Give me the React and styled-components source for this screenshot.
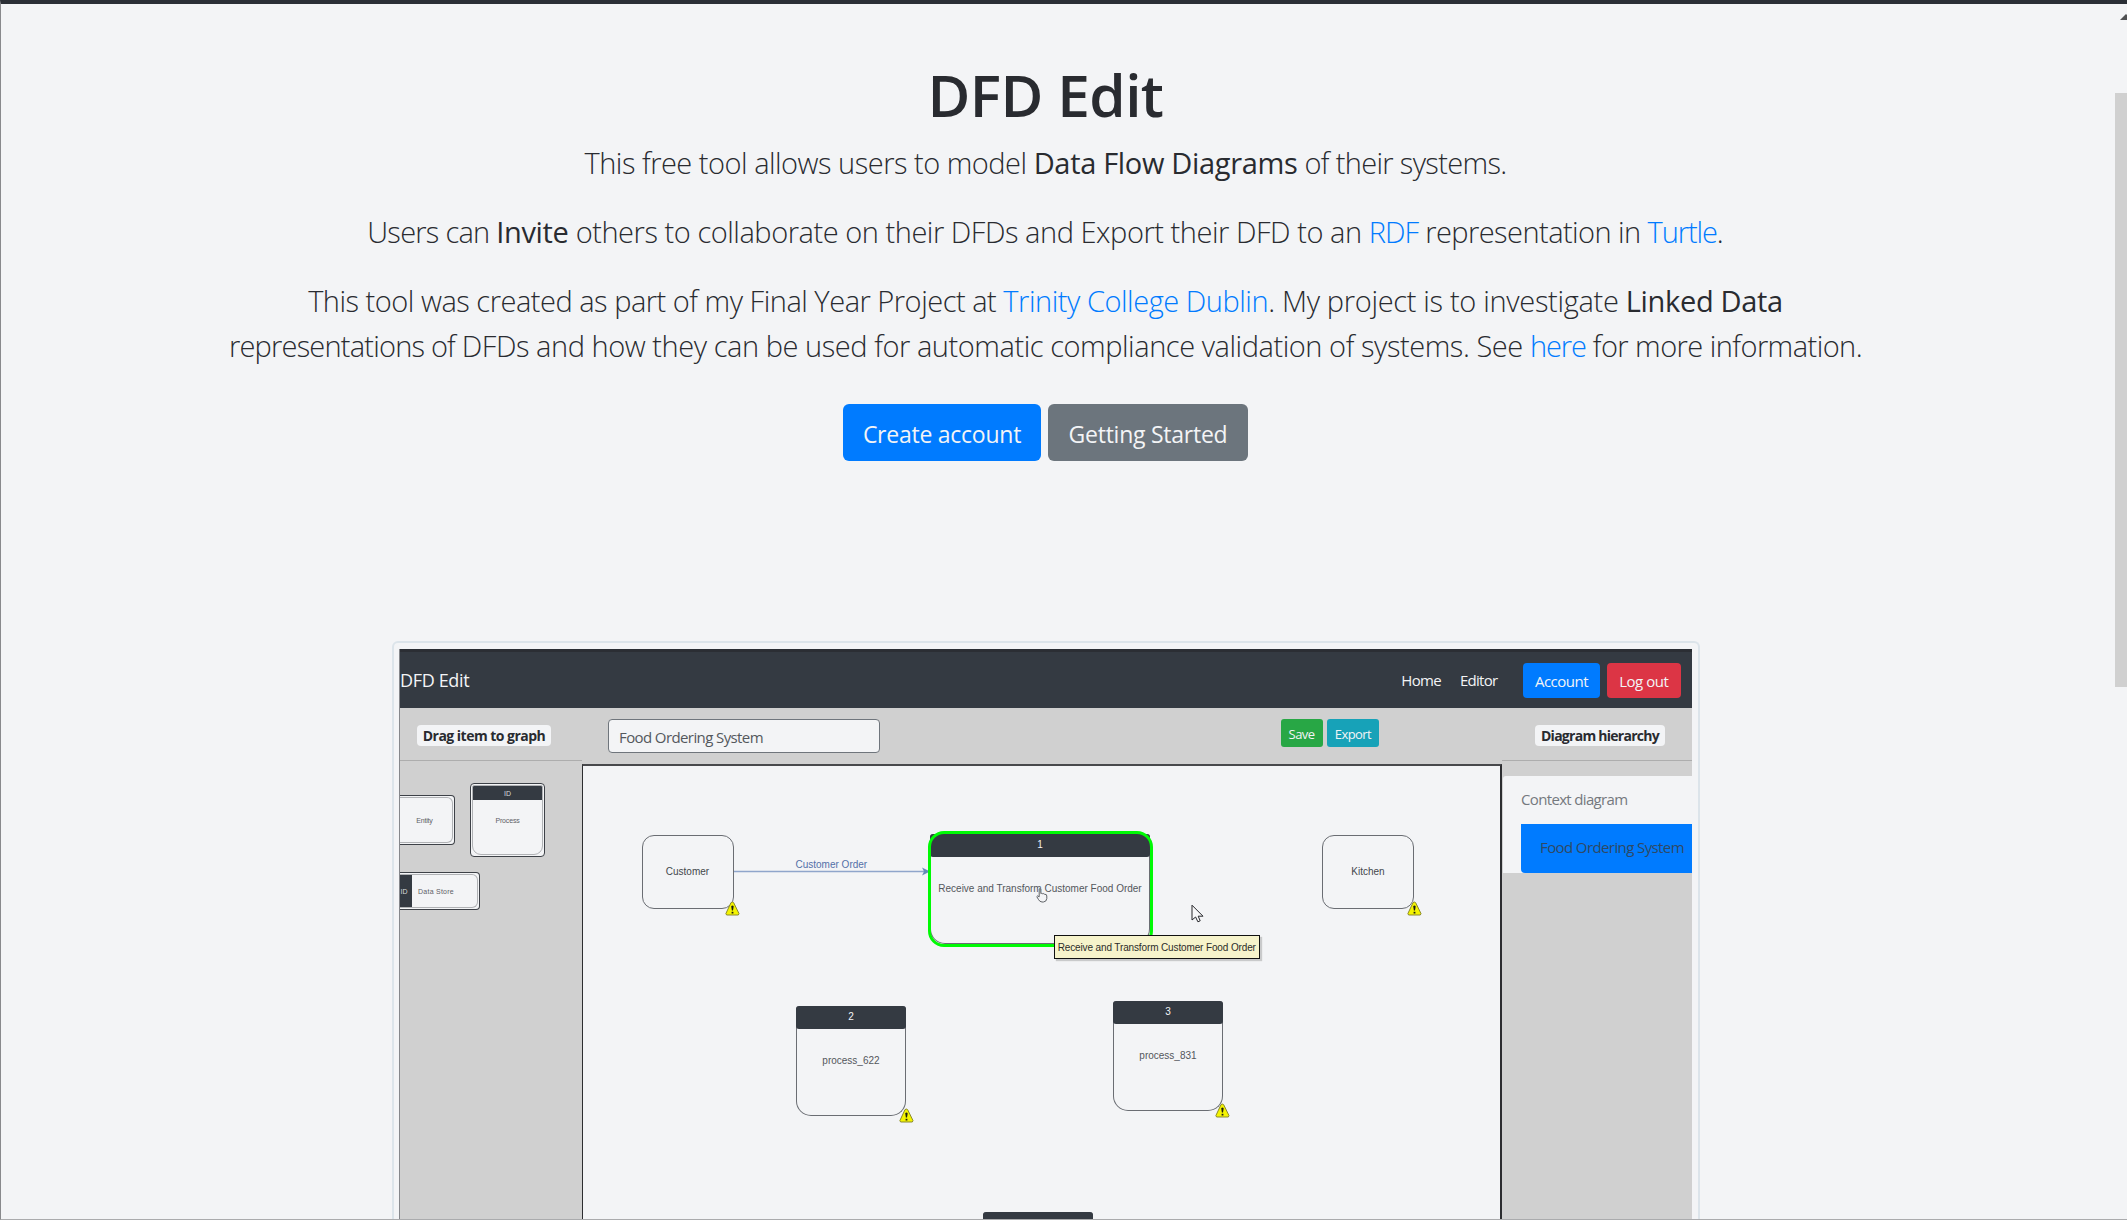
import React from "react";
import styled, { createGlobalStyle, css } from "styled-components";

const ui = '"Open Sans", "Noto Sans", sans-serif';
const diagram = '"Liberation Sans", Arial, sans-serif';

const Global = createGlobalStyle`
  * { box-sizing: border-box; }
  body {
    margin: 0;
    background: #f3f4f6;
    color: #292b30;
    font-family: ${ui};
    overflow: hidden;
  }
  p, h1 { margin: 0; }
  a { color: #007bff; text-decoration: none; }
`;

/* ---------- page frame ---------- */

const Page = styled.div`
  display: flex;
  height: 1220px;
  overflow: hidden;
  border-top: 4px solid #2b2f36;
  border-left: 1px solid #88898c;
  border-bottom: 1px solid #aaabad;
`;

const Main = styled.main`
  width: 2090px;
  display: flex;
  flex-direction: column;
  align-items: center;
  padding-top: 54px;
`;

const ScrollTrack = styled.div`
  flex: 1;
  display: flex;
  flex-direction: column;
  align-items: flex-end;
  overflow: hidden;
  padding-top: 10px;
`;

const ScrollUp = styled.svg`
  width: 7px;
  height: 6px;
  flex: none;
`;

const ScrollThumb = styled.div`
  width: 12px;
  height: 594px;
  margin-top: 73px;
  background: #d0d0d0;
`;

/* ---------- intro ---------- */

const Title = styled.h1`
  font-size: 58.5px;
  font-weight: 600;
  line-height: 72px;
  letter-spacing: -0.6px;
  margin-bottom: 10px;
  padding-right: 1px;
`;

const Lead = styled.p`
  font-size: 29px;
  font-weight: 300;
  line-height: 45px;
  margin-bottom: ${(p) => (p.$last ? 36 : 24)}px;
  padding-right: 1px;
  text-align: center;
  white-space: nowrap;
`;

const Line = styled.span`
  display: block;
`;

const Run = styled.span`
  letter-spacing: ${(p) => p.$ls}px;
`;

const Strong = styled.b`
  font-weight: 400;
  letter-spacing: -0.32px;
`;

const Actions = styled.div`
  display: flex;
  gap: 7px;
  margin-bottom: 180px;
  padding-right: 1px;
`;

const BigButton = styled.button`
  width: ${(p) => p.$w}px;
  height: 57px;
  padding: 3px 0 0;
  border: 0;
  border-radius: 6px;
  background: ${(p) => p.$bg};
  color: #f3f4f6;
  font: 400 23px ${ui};
  letter-spacing: -0.25px;
`;

/* ---------- preview ---------- */

const Thumbnail = styled.section`
  width: 1308px;
  height: 600px;
  flex: none;
  padding: 6px 6px 0 5px;
  border: 2px solid #dce4ea;
  border-bottom: 0;
  border-radius: 6px 6px 0 0;
`;

const Shot = styled.div`
  display: flex;
  flex-direction: column;
  height: 100%;
  overflow: hidden;
  border-left: 1px solid #85878b;
  background: #d0d0d0;
`;

const Navbar = styled.header`
  height: 59px;
  flex: none;
  display: flex;
  align-items: center;
  padding: 0 11.5px 0 0;
  border-top: 3px solid #2b2e34;
  background: #343a42;
  color: #f3f4f6;
`;

const Brand = styled.span`
  flex: 1;
  font-size: 18px;
  letter-spacing: -0.35px;
  line-height: 24px;
`;

const NavLink = styled.span`
  font-size: 15px;
  letter-spacing: -0.7px;
  margin-right: ${(p) => p.$gap}px;
`;

const NavButton = styled.button`
  width: ${(p) => p.$w}px;
  height: 35px;
  margin-left: ${(p) => p.$ml || 0}px;
  padding: 1px 0 0;
  border: 0;
  border-radius: 4px;
  background: ${(p) => p.$bg};
  color: #f3f4f6;
  font: 400 15px ${ui};
  letter-spacing: -0.5px;
`;

const Columns = styled.div`
  flex: 1;
  min-height: 0;
  display: grid;
  grid-template-columns: 182px 920px 1fr;
`;

const Side = styled.aside`
  min-width: 0;
  overflow: hidden;
`;

const SideHead = styled.div`
  height: 53px;
  display: flex;
  padding: 17px 0 0 ${(p) => p.$pl}px;
  border-bottom: 1px solid #adadad;
`;

const Badge = styled.span`
  width: ${(p) => p.$w}px;
  height: 21px;
  border-radius: 4px;
  background: #f3f4f6;
  text-align: center;
  font-size: 14px;
  font-weight: 700;
  line-height: 21px;
  letter-spacing: ${(p) => p.$ls}px;
  white-space: nowrap;
`;

const Palette = styled.div`
  display: grid;
  grid-template-columns: 55px 75px;
  column-gap: 15px;
  align-items: start;
  padding-top: 22px;
`;

const PaletteItem = styled.div`
  position: relative;
  width: ${(p) => p.$w}px;
  height: ${(p) => p.$h}px;
  margin-top: ${(p) => p.$mt || 0}px;
  border: 1.5px solid #3d4147;
  border-left-width: ${(p) => (p.$cut ? 0 : 1)}px;
  border-radius: ${(p) => (p.$cut ? "0 4px 4px 0" : "4px")};
  padding: 1px 1px 1px ${(p) => (p.$cut ? 0 : 1)}px;
  background: #f3f4f6;
`;

const PaletteShape = styled.div`
  height: 100%;
  display: flex;
  flex-direction: ${(p) => (p.$row ? "row" : "column")};
  align-items: center;
  overflow: hidden;
  border: 1px solid #b0b2b5;
  border-left-width: ${(p) => (p.$cut ? 0 : 1)}px;
  border-radius: ${(p) => p.$radius};
  color: #5d6066;
  font: 7px/9px ${diagram};
`;

const PaletteHead = styled.span`
  align-self: stretch;
  height: ${(p) => (p.$side ? "auto" : "14px")};
  width: ${(p) => (p.$side ? "12px" : "auto")};
  padding-right: ${(p) => (p.$side ? 4 : 0)}px;
  flex: none;
  display: flex;
  align-items: center;
  justify-content: center;
  background: #343a42;
  color: #d9dadc;
`;

const PaletteText = styled.span`
  margin: ${(p) => p.$m};
  letter-spacing: ${(p) => p.$ls || 0}px;
  white-space: nowrap;
`;

const Center = styled.div`
  display: flex;
  flex-direction: column;
`;

const Toolbar = styled.div`
  height: 56px;
  flex: none;
  display: flex;
  align-items: flex-start;
  padding: 11px 123px 0 25.5px;
`;

const NameInput = styled.div`
  width: 272px;
  height: 34px;
  margin-right: auto;
  padding-left: 10.5px;
  border: 1px solid #6f757c;
  border-radius: 4px;
  background: #f3f4f6;
  color: #54585d;
  font-size: 15px;
  line-height: 35px;
  letter-spacing: -0.6px;
`;

const SmallButton = styled.button`
  width: ${(p) => p.$w}px;
  height: 28px;
  margin-left: 4.5px;
  padding: 1px 0 0;
  border: 0;
  border-radius: 3px;
  background: ${(p) => p.$bg};
  color: #f3f4f6;
  font: 400 13px ${ui};
  letter-spacing: -0.58px;
`;

const Canvas = styled.div`
  position: relative;
  flex: 1;
  overflow: hidden;
  border: solid #2c2d30;
  border-width: 2px 2px 0 1.5px;
  border-top-color: #48494c;
  background: #f3f4f6;
  font-family: ${diagram};
  font-size: 10px;
`;

const nodePlace = css`
  position: absolute;
  left: ${(p) => p.$x}px;
  top: ${(p) => p.$y}px;
  width: ${(p) => p.$w}px;
  height: ${(p) => p.$h}px;
`;

const Entity = styled.div`
  ${nodePlace}
  display: flex;
  align-items: center;
  justify-content: center;
  padding-bottom: 2px;
  border: 1px solid #6a6d73;
  border-radius: 12px;
  color: #43474c;
`;

const Process = styled.div`
  ${nodePlace}
  border: 1px solid #6a6d73;
  border-top: 0;
  border-radius: 4px 4px 15px 15px;
  color: #54575c;
  text-align: center;
`;

const ProcessHead = styled.div`
  height: 23px;
  margin: 0 -1px;
  border-radius: 3px;
  background: #343a42;
  color: #f3f4f6;
  line-height: 21px;
`;

const ProcessLabel = styled.div`
  margin-top: 25px;
  line-height: 14px;
  white-space: nowrap;
`;

const Selection = styled.div`
  ${nodePlace}
  border: 3px solid #00fa05;
  border-radius: 16px;
`;

const Overlay = styled.svg`
  ${nodePlace}
`;

const EdgeLabel = styled.span`
  position: absolute;
  left: 212.5px;
  top: 92px;
  color: #5470a8;
  line-height: 14px;
`;

const Tooltip = styled.div`
  ${nodePlace}
  display: flex;
  align-items: center;
  justify-content: center;
  border: 1px solid #111;
  background: #f6f3cb;
  color: #2c2d2a;
  letter-spacing: -0.13px;
  white-space: nowrap;
  box-shadow: 2px 2px 1px #c9cacb;
`;

const Tree = styled.div`
  margin: 15px 0 0 1px;
  height: 97px;
  border-radius: 3px 0 0 0;
  background: #f3f4f6;
  padding-left: 18px;
  font-size: 15px;
  white-space: nowrap;
`;

const TreeRoot = styled.div`
  height: 48px;
  line-height: 47px;
  letter-spacing: -0.66px;
  color: #75797e;
`;

const TreeItem = styled.div`
  height: 49px;
  padding-left: 19px;
  border-radius: 0 0 0 4px;
  background: #007bff;
  color: #2f4964;
  line-height: 47px;
  letter-spacing: -0.6px;
`;

/* ---------- drawings ---------- */

const Warning = ({ x, y }) => (
  <Overlay $x={x} $y={y} $w={15} $h={15} viewBox="0 0 15 15">
    <path d="M7.3 1 L8.6 1.6 L14 12.6 L13.3 14 H1.6 L0.9 12.6 L6 1.6 Z" fill="#f4f400" stroke="#8b8a2c" strokeWidth="1" strokeLinejoin="round" />
    <path d="M6.2 5.2 Q7.4 4 8.7 5.2 L8 9.6 H6.9 Z" fill="#1c1c10" />
    <rect x="6.6" y="10.8" width="1.8" height="1.7" fill="#1c1c10" />
  </Overlay>
);

const ProcessNode = ({ x, y, w = 110, h = 110, id, label }) => (
  <Process $x={x} $y={y} $w={w} $h={h}>
    <ProcessHead>{id}</ProcessHead>
    <ProcessLabel>{label}</ProcessLabel>
  </Process>
);

const Diagram = () => (
  <Canvas>
    <Overlay $x={149} $y={99} $w={200} $h={14} viewBox="0 0 200 14">
      <path d="M1 6.5 H192" stroke="#8fa5cb" strokeWidth="1.3" />
      <path d="M190 2.5 L198 6.5 L190 10.5 L192 6.5 Z" fill="#668bb8" />
    </Overlay>
    <EdgeLabel>Customer Order</EdgeLabel>
    <Entity $x={58.5} $y={69} $w={92} $h={74}>Customer</Entity>
    <Entity $x={739} $y={69} $w={92} $h={74}>Kitchen</Entity>
    <Warning x={142} y={135} />
    <Warning x={823.5} y={135} />

    <ProcessNode x={347} y={68} w={220} h={110} id="1" label="Receive and Transform Customer Food Order" />
    <Selection $x={344.5} $y={65} $w={225.5} $h={115.5} />

    <ProcessNode x={213} y={240} id="2" label="process_622" />
    <Warning x={315.5} y={342} />
    <ProcessNode x={530} y={234.5} id="3" label="process_831" />
    <Warning x={631.5} y={336.5} />
    <ProcessNode x={399.5} y={446} />

    <Tooltip $x={470.5} $y={169} $w={206.5} $h={24}>Receive and Transform Customer Food Order</Tooltip>

    <Overlay $x={452.5} $y={121} $w={12} $h={16} viewBox="0 0 12 16">
      <path d="M3.2 9.8 V2 Q3.9 0.6 4.8 2 V6.5 Q6 5.7 6.7 6.8 Q7.9 6.2 8.6 7.3 Q10.8 7 10.8 9 V11.5 Q10.5 14.8 7.4 15 H6 Q3.6 14.8 2.4 12.4 L0.8 9.6 Q1.2 8 3.2 9.8 Z" fill="#f3f4f6" stroke="#4f5257" strokeWidth="0.9" />
    </Overlay>
    <Overlay $x={608} $y={138} $w={14} $h={20} viewBox="0 0 14 20">
      <path d="M1 1.2 V16 L4.6 13 L6.9 17.8 L9.2 16.8 L7.2 12.2 H12 Z" fill="#f8f8f9" stroke="#26272b" strokeWidth="1" />
    </Overlay>
  </Canvas>
);

export default function App() {
  return (
    <>
      <Global />
      <Page>
        <Main>
          <Title>DFD Edit</Title>
          <Lead>
            <Run $ls={-0.5}>This free tool allows users to model </Run>
            <Strong>Data Flow Diagrams</Strong>
            <Run $ls={-0.67}> of their systems.</Run>
          </Lead>
          <Lead>
            <Run $ls={-0.75}>Users can </Run>
            <Strong>Invite</Strong>
            <Run $ls={-0.46}> others to collaborate on their DFDs and Export their DFD to an </Run>
            <Run as="a" href="#rdf" $ls={-0.9}>RDF</Run>
            <Run $ls={-0.56}> representation in </Run>
            <Run as="a" href="#turtle" $ls={-1.1}>Turtle</Run>.
          </Lead>
          <Lead $last>
            <Line>
              <Run $ls={-0.49}>This tool was created as part of my Final Year Project at </Run>
              <Run as="a" href="#tcd" $ls={-0.46}>Trinity College Dublin</Run>
              <Run $ls={-0.32}>. My project is to investigate </Run>
              <Strong>Linked Data</Strong>
            </Line>
            <Line>
              <Run $ls={-0.8}>representations of </Run>
              <Run $ls={-0.45}>DFDs and how they can be used for automatic compliance validation of systems. See </Run>
              <Run as="a" href="#here" $ls={-1.1}>here</Run>
              <Run $ls={-0.55}> for more information.</Run>
            </Line>
          </Lead>
          <Actions>
            <BigButton $w={198} $bg="#007bff">Create account</BigButton>
            <BigButton $w={200} $bg="#6c757d">Getting Started</BigButton>
          </Actions>

          <Thumbnail>
            <Shot>
              <Navbar>
                <Brand>DFD Edit</Brand>
                <NavLink $gap={19}>Home</NavLink>
                <NavLink $gap={25.5}>Editor</NavLink>
                <NavButton $w={77} $bg="#007bff">Account</NavButton>
                <NavButton $w={73.5} $ml={7} $bg="#dc3545">Log out</NavButton>
              </Navbar>
              <Columns>
                <Side>
                  <SideHead $pl={17}>
                    <Badge $w={134} $ls={-0.52}>Drag item to graph</Badge>
                  </SideHead>
                  <Palette>
                    <PaletteItem $cut $w={55} $h={50} $mt={12}>
                      <PaletteShape $cut $radius="0 6px 6px 0">
                        <PaletteText $m="18px 0 0 -3px" $ls={-0.2}>Entity</PaletteText>
                      </PaletteShape>
                    </PaletteItem>
                    <PaletteItem $w={75} $h={74}>
                      <PaletteShape $radius="2px 2px 9px 9px">
                        <PaletteHead>ID</PaletteHead>
                        <PaletteText $m="16px 0 0" $ls={-0.15}>Process</PaletteText>
                      </PaletteShape>
                    </PaletteItem>
                    <PaletteItem $cut $w={80} $h={38} $mt={15}>
                      <PaletteShape $row $cut $radius="0 6px 6px 0">
                        <PaletteHead $side>ID</PaletteHead>
                        <PaletteText $m="0 0 0 6px" $ls={0.25}>Data Store</PaletteText>
                      </PaletteShape>
                    </PaletteItem>
                  </Palette>
                </Side>

                <Center>
                  <Toolbar>
                    <NameInput>Food Ordering System</NameInput>
                    <SmallButton $w={42} $bg="#28a745">Save</SmallButton>
                    <SmallButton $w={52} $bg="#17a2b8">Export</SmallButton>
                  </Toolbar>
                  <Diagram />
                </Center>

                <Side>
                  <SideHead $pl={33}>
                    <Badge $w={130} $ls={-0.73}>Diagram hierarchy</Badge>
                  </SideHead>
                  <Tree>
                    <TreeRoot>Context diagram</TreeRoot>
                    <TreeItem>Food Ordering System</TreeItem>
                  </Tree>
                </Side>
              </Columns>
            </Shot>
          </Thumbnail>
        </Main>

        <ScrollTrack>
          <ScrollUp viewBox="0 0 7 6">
            <path d="M0 6 L6 0 L7 1 V6 Z" fill="#505153" />
          </ScrollUp>
          <ScrollThumb />
        </ScrollTrack>
      </Page>
    </>
  );
}
